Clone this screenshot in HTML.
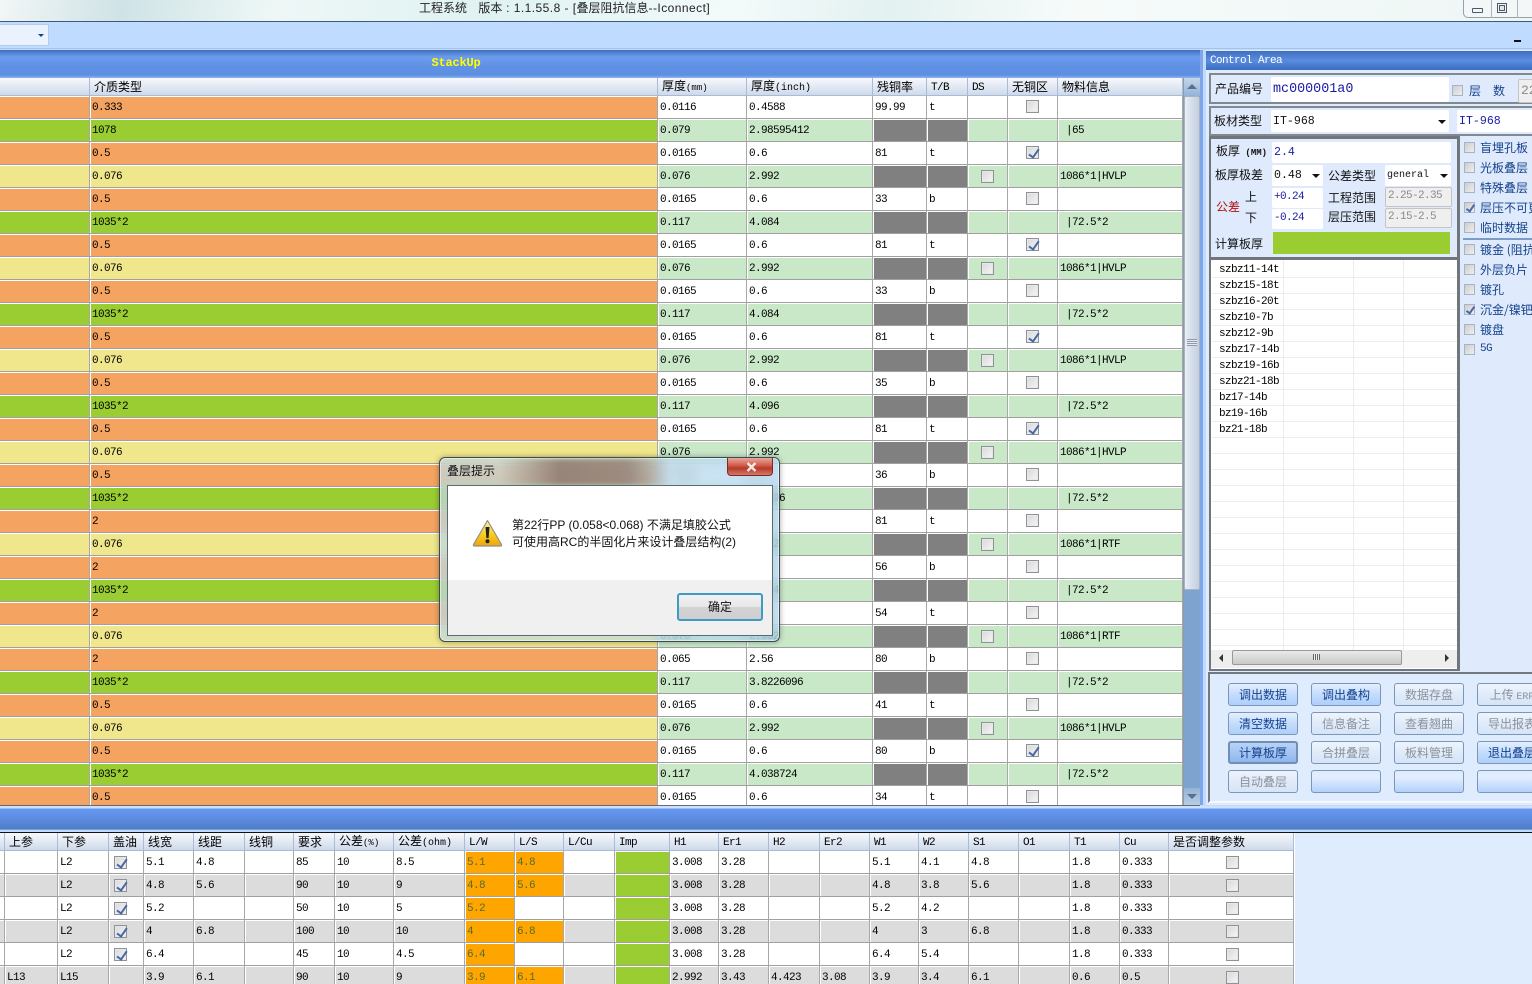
<!DOCTYPE html>
<html><head><meta charset="utf-8"><title>叠层阻抗信息</title>
<style>
html,body{margin:0;padding:0;width:1532px;height:984px;overflow:hidden;background:#bfdbff}
*{box-sizing:border-box}
body{position:relative;font:12px/1 "WenQuanYi Zen Hei","Noto Sans CJK SC",sans-serif;color:#111}
.a{position:absolute}
.m{font-family:"Liberation Mono","WenQuanYi Zen Hei",monospace;font-size:10px}
table{border-collapse:separate;border-spacing:0;table-layout:fixed;position:absolute;left:0;top:0;font:11px/1 "Liberation Mono","WenQuanYi Zen Hei",monospace;letter-spacing:-.6px;color:#000}
td,th{padding:3px 0 0 2px;overflow:hidden;white-space:nowrap;border-right:1px solid #a8a8a8;border-bottom:1px solid #a0a0a0;box-shadow:inset 1px 1px #fff}
td:first-child{box-shadow:inset 0 1px #fff}
th{height:18px;font-weight:normal;text-align:left;letter-spacing:0;font:12px/1 "WenQuanYi Zen Hei","Noto Sans CJK SC",sans-serif;background:linear-gradient(#f6f8fc,#dfe6f2 60%,#cdd9ea);padding:0 0 0 4px;box-shadow:none;border-color:#a9bcd3}
th.e{font:11px/1 "Liberation Mono",monospace;letter-spacing:-.6px;padding-top:3px}
#t td{height:23px}
.o td{background:#fff}.o td:nth-child(-n+2){background:#f4a460}
.g td{background:#c8e8c8}.g td:nth-child(-n+2){background:#9acd32}
.y td{background:#c8e8c8}.y td:nth-child(-n+2){background:#f0e68c}
.g td:nth-child(5),.g td:nth-child(6),.y td:nth-child(5),.y td:nth-child(6){background:#808080}
#b td{height:23px}
#bb tr:nth-child(even) td{background:#dcdcdc}
#bb tr:nth-child(odd) td{background:#fff}
#b td:nth-child(14){background:#9acd32!important}
#b td.r{background:#ffa500!important;color:#556b2f}
.c{display:block;width:13px;height:13px;margin:auto;border:1px solid #8f9297;background:linear-gradient(135deg,#d8d8d8,#f6f6f6);position:relative;top:-2px;left:-1px;box-shadow:inset 0 0 0 1px #e8e8e8}
.y .c{top:-1px}
#b .c{top:-1px;left:0}
#b .k{margin-left:3px}
.k::after{content:"";position:absolute;left:4px;top:0;width:4px;height:9px;border:solid #4a67a8;border-width:0 2px 2px 0;transform:rotate(35deg)}
.i{position:absolute;background:#fff;border-radius:2px;padding-left:2px;display:flex;align-items:center;font-family:"Liberation Mono",monospace;white-space:nowrap;overflow:hidden}
.bl{color:#1a1aa6}
.n{font-size:11px;letter-spacing:-.6px;padding-bottom:2px}
.gr{background:#efefef;border:1px solid #c4c4c4;color:#8a8a8a;font-size:11px;letter-spacing:-.6px;padding-bottom:2px}
.ar{position:absolute;width:0;height:0;border:4px solid transparent;border-top-color:#111;border-bottom-width:0}
.l{position:absolute;white-space:nowrap;color:#111}
.d{position:absolute;left:1480px;color:#15428b;white-space:nowrap}
.s{position:absolute;left:1464px;width:11px;height:11px;border:1px solid #a6b4c6;background:linear-gradient(135deg,#ccc,#efefef)}
.s.k::after{left:3px;top:0;width:3px;height:7px;border-width:0 2px 2px 0}
.lr{position:absolute;left:1219px;color:#000;font:11px/1 "Liberation Mono",monospace;letter-spacing:-.6px}
.hl{position:absolute;left:1212px;width:245px;height:1px;background:#ececec}
.b{position:absolute;width:70px;height:23px;border:1px solid #7b97b8;border-radius:3px;background:linear-gradient(#e4efff,#c6defe 45%,#aecffa);color:#15428b;text-align:center;line-height:21px;white-space:nowrap;overflow:hidden}
.b.f{color:#8b929a;background:linear-gradient(#eef4fd,#e0ebfa 50%,#d6e4f7)}
.b.z{background:linear-gradient(#dfeaff,#e3efff 30%,#b3d1fb)}
.b.h{border:2px solid #6f8fb6;background:linear-gradient(#b9d3f6,#8fb6ee);line-height:19px}
.v{letter-spacing:.45px}
</style></head><body>

<!-- title bar -->
<div class="a" style="left:0;top:0;width:1532px;height:22px;background:linear-gradient(100deg,#f2f6f6 0,#cfe3e6 8%,#eef7f6 18%,#dff2f2 32%,#f3fafa 48%,#e3f1f0 58%,#f6fbfa 70%,#eef6f5 100%);border-bottom:1px solid #3e5a78"></div>
<div class="a" style="left:419px;top:2px;font:12px/13px 'Liberation Sans','Noto Sans CJK SC',sans-serif;white-space:nowrap;color:#222">工程系统<span class="v">&nbsp;&nbsp; </span>版本<span class="v"> : 1.1.55.8 - [</span>叠层阻抗信息<span class="v">--Iconnect]</span></div>
<div class="a" style="left:1463px;top:-2px;width:80px;height:20px;background:#f4f7f8;border:1px solid #93a1ad;border-radius:0 0 0 5px"></div>
<div class="a" style="left:1491px;top:0;width:1px;height:18px;background:#aab5be"></div>
<div class="a" style="left:1517px;top:0;width:1px;height:18px;background:#aab5be"></div>
<div class="a" style="left:1472px;top:8px;width:11px;height:5px;border:1px solid #4a5a6a;border-radius:1px"></div>
<div class="a" style="left:1497px;top:3px;width:10px;height:10px;border:1px solid #4a5a6a"></div>
<div class="a" style="left:1499px;top:5px;width:6px;height:6px;border:1px solid #4a5a6a;background:#dfe6ea"></div>

<!-- toolbar -->
<div class="a" style="left:0;top:22px;width:1532px;height:27px;background:#bfdbff;border-bottom:1px solid #a9c2e2"></div>
<div class="a" style="left:0;top:24px;width:49px;height:22px;background:#eaf2fd;border:1px solid #b5cce8;border-left:0"></div>
<div class="ar" style="left:38px;top:34px;border-width:3px 3px 0;border-top-color:#15428b"></div>
<div class="a" style="left:1514px;top:40px;width:7px;height:2px;background:#111"></div>

<!-- stackup panel -->
<div class="a" style="left:0;top:50px;width:1202px;height:28px;background:linear-gradient(#3e6fbe,#6d9cee 25%,#5f90e4 60%,#5d8fe2 90%,#8fb5f1)"></div>
<div class="a" style="left:0;top:57px;width:912px;text-align:center;color:#ffff00;font:bold 12px/13px 'Liberation Mono',monospace;letter-spacing:-.2px">StackUp</div>

<div class="a" style="left:0;top:78px;width:1183px;height:727px;overflow:hidden;background:#fff">
<table id="t" style="width:1183px">
<colgroup><col style="width:90px"><col style="width:568px"><col style="width:89px"><col style="width:126px"><col style="width:54px"><col style="width:41px"><col style="width:40px"><col style="width:50px"><col style="width:125px"></colgroup>
<tr><th></th><th>介质类型</th><th>厚度<span class="m" style="font-size:9px">(mm)</span></th><th>厚度<span class="m">(inch)</span></th><th>残铜率</th><th class="e">T/B</th><th class="e">DS</th><th>无铜区</th><th>物料信息</th></tr>
<tr class="o"><td></td><td>0.333</td><td>0.0116</td><td>0.4588</td><td>99.99</td><td>t</td><td></td><td><i class="c"></i></td><td></td></tr>
<tr class="g"><td></td><td>1078</td><td>0.079</td><td>2.98595412</td><td></td><td></td><td></td><td></td><td>&nbsp;|65</td></tr>
<tr class="o"><td></td><td>0.5</td><td>0.0165</td><td>0.6</td><td>81</td><td>t</td><td></td><td><i class="c k"></i></td><td></td></tr>
<tr class="y"><td></td><td>0.076</td><td>0.076</td><td>2.992</td><td></td><td></td><td><i class="c"></i></td><td></td><td>1086*1|HVLP</td></tr>
<tr class="o"><td></td><td>0.5</td><td>0.0165</td><td>0.6</td><td>33</td><td>b</td><td></td><td><i class="c"></i></td><td></td></tr>
<tr class="g"><td></td><td>1035*2</td><td>0.117</td><td>4.084</td><td></td><td></td><td></td><td></td><td>&nbsp;|72.5*2</td></tr>
<tr class="o"><td></td><td>0.5</td><td>0.0165</td><td>0.6</td><td>81</td><td>t</td><td></td><td><i class="c k"></i></td><td></td></tr>
<tr class="y"><td></td><td>0.076</td><td>0.076</td><td>2.992</td><td></td><td></td><td><i class="c"></i></td><td></td><td>1086*1|HVLP</td></tr>
<tr class="o"><td></td><td>0.5</td><td>0.0165</td><td>0.6</td><td>33</td><td>b</td><td></td><td><i class="c"></i></td><td></td></tr>
<tr class="g"><td></td><td>1035*2</td><td>0.117</td><td>4.084</td><td></td><td></td><td></td><td></td><td>&nbsp;|72.5*2</td></tr>
<tr class="o"><td></td><td>0.5</td><td>0.0165</td><td>0.6</td><td>81</td><td>t</td><td></td><td><i class="c k"></i></td><td></td></tr>
<tr class="y"><td></td><td>0.076</td><td>0.076</td><td>2.992</td><td></td><td></td><td><i class="c"></i></td><td></td><td>1086*1|HVLP</td></tr>
<tr class="o"><td></td><td>0.5</td><td>0.0165</td><td>0.6</td><td>35</td><td>b</td><td></td><td><i class="c"></i></td><td></td></tr>
<tr class="g"><td></td><td>1035*2</td><td>0.117</td><td>4.096</td><td></td><td></td><td></td><td></td><td>&nbsp;|72.5*2</td></tr>
<tr class="o"><td></td><td>0.5</td><td>0.0165</td><td>0.6</td><td>81</td><td>t</td><td></td><td><i class="c k"></i></td><td></td></tr>
<tr class="y"><td></td><td>0.076</td><td>0.076</td><td>2.992</td><td></td><td></td><td><i class="c"></i></td><td></td><td>1086*1|HVLP</td></tr>
<tr class="o"><td></td><td>0.5</td><td>0.0165</td><td>0.6</td><td>36</td><td>b</td><td></td><td><i class="c"></i></td><td></td></tr>
<tr class="g"><td></td><td>1035*2</td><td>0.117</td><td>4.0896</td><td></td><td></td><td></td><td></td><td>&nbsp;|72.5*2</td></tr>
<tr class="o"><td></td><td>2</td><td>0.065</td><td>2.56</td><td>81</td><td>t</td><td></td><td><i class="c"></i></td><td></td></tr>
<tr class="y"><td></td><td>0.076</td><td>0.076</td><td>2.992</td><td></td><td></td><td><i class="c"></i></td><td></td><td>1086*1|RTF</td></tr>
<tr class="o"><td></td><td>2</td><td>0.065</td><td>2.56</td><td>56</td><td>b</td><td></td><td><i class="c"></i></td><td></td></tr>
<tr class="g"><td></td><td>1035*2</td><td>0.117</td><td>4.084</td><td></td><td></td><td></td><td></td><td>&nbsp;|72.5*2</td></tr>
<tr class="o"><td></td><td>2</td><td>0.065</td><td>2.56</td><td>54</td><td>t</td><td></td><td><i class="c"></i></td><td></td></tr>
<tr class="y"><td></td><td>0.076</td><td>0.076</td><td>2.992</td><td></td><td></td><td><i class="c"></i></td><td></td><td>1086*1|RTF</td></tr>
<tr class="o"><td></td><td>2</td><td>0.065</td><td>2.56</td><td>80</td><td>b</td><td></td><td><i class="c"></i></td><td></td></tr>
<tr class="g"><td></td><td>1035*2</td><td>0.117</td><td>3.8226096</td><td></td><td></td><td></td><td></td><td>&nbsp;|72.5*2</td></tr>
<tr class="o"><td></td><td>0.5</td><td>0.0165</td><td>0.6</td><td>41</td><td>t</td><td></td><td><i class="c"></i></td><td></td></tr>
<tr class="y"><td></td><td>0.076</td><td>0.076</td><td>2.992</td><td></td><td></td><td><i class="c"></i></td><td></td><td>1086*1|HVLP</td></tr>
<tr class="o"><td></td><td>0.5</td><td>0.0165</td><td>0.6</td><td>80</td><td>b</td><td></td><td><i class="c k"></i></td><td></td></tr>
<tr class="g"><td></td><td>1035*2</td><td>0.117</td><td>4.038724</td><td></td><td></td><td></td><td></td><td>&nbsp;|72.5*2</td></tr>
<tr class="o"><td></td><td>0.5</td><td>0.0165</td><td>0.6</td><td>34</td><td>t</td><td></td><td><i class="c"></i></td><td></td></tr>
</table>
</div>

<!-- vertical scrollbar -->
<div class="a" style="left:1183px;top:78px;width:17px;height:727px;background:#7fa3cf;border-left:1px solid #8a9bb0"></div>
<div class="a" style="left:1184px;top:78px;width:16px;height:18px;background:linear-gradient(#c4d5ea,#94b3d8)"></div>
<div class="ar" style="left:1187px;top:84px;border-width:0 5px 5px;border-color:transparent transparent #5a6f8a"></div>
<div class="a" style="left:1184px;top:96px;width:16px;height:494px;background:linear-gradient(90deg,#e9eef6,#d3dce9 55%,#c2cfe0);border:1px solid #a7b2c2;border-radius:2px"></div>
<div class="a" style="left:1187px;top:339px;width:10px;height:7px;background:repeating-linear-gradient(#8f9bab 0 1px,#e5eaf0 1px 2px)"></div>
<div class="a" style="left:1184px;top:788px;width:16px;height:17px;background:linear-gradient(#94b3d8,#b8cde6)"></div>
<div class="ar" style="left:1187px;top:794px;border-width:5px 5px 0;border-color:#5a6f8a transparent transparent"></div>
<div class="a" style="left:1200px;top:50px;width:3px;height:755px;background:#7ea6e8"></div>
<div class="a" style="left:0;top:805px;width:1200px;height:1px;background:#5e6b7c"></div>

<!-- bottom band -->
<div class="a" style="left:0;top:806px;width:1532px;height:26px;background:linear-gradient(#cfe0fa 0,#d0e2fb 2px,#6597f2 3px,#5f90e6 40%,#4f7dc6 90%,#bfdbff 92%)"></div>
<div class="a" style="left:0;top:832px;width:1532px;height:152px;background:#dfecfd;border-top:1px solid #111"></div>

<!-- bottom grid -->
<div class="a" style="left:0;top:833px;width:1295px;height:151px;overflow:hidden;background:#fff">
<table id="b" style="width:1294px">
<colgroup><col style="width:5px"><col style="width:53px"><col style="width:51px"><col style="width:35px"><col style="width:50px"><col style="width:51px"><col style="width:49px"><col style="width:41px"><col style="width:59px"><col style="width:71px"><col style="width:50px"><col style="width:49px"><col style="width:51px"><col style="width:55px"><col style="width:49px"><col style="width:50px"><col style="width:51px"><col style="width:50px"><col style="width:49px"><col style="width:50px"><col style="width:50px"><col style="width:51px"><col style="width:50px"><col style="width:49px"><col style="width:125px"></colgroup>
<thead><tr><th></th><th>上参</th><th>下参</th><th>盖油</th><th>线宽</th><th>线距</th><th>线铜</th><th>要求</th><th>公差<span class="m" style="font-size:9px">(%)</span></th><th>公差<span class="m">(ohm)</span></th><th class="e">L/W</th><th class="e">L/S</th><th class="e">L/Cu</th><th class="e">Imp</th><th class="e">H1</th><th class="e">Er1</th><th class="e">H2</th><th class="e">Er2</th><th class="e">W1</th><th class="e">W2</th><th class="e">S1</th><th class="e">O1</th><th class="e">T1</th><th class="e">Cu</th><th>是否调整参数</th></tr></thead>
<tbody id="bb">
<tr><td></td><td></td><td>L2</td><td><i class="c k"></i></td><td>5.1</td><td>4.8</td><td></td><td>85</td><td>10</td><td>8.5</td><td class="r">5.1</td><td class="r">4.8</td><td></td><td></td><td>3.008</td><td>3.28</td><td></td><td></td><td>5.1</td><td>4.1</td><td>4.8</td><td></td><td>1.8</td><td>0.333</td><td><i class="c"></i></td></tr>
<tr><td></td><td></td><td>L2</td><td><i class="c k"></i></td><td>4.8</td><td>5.6</td><td></td><td>90</td><td>10</td><td>9</td><td class="r">4.8</td><td class="r">5.6</td><td></td><td></td><td>3.008</td><td>3.28</td><td></td><td></td><td>4.8</td><td>3.8</td><td>5.6</td><td></td><td>1.8</td><td>0.333</td><td><i class="c"></i></td></tr>
<tr><td></td><td></td><td>L2</td><td><i class="c k"></i></td><td>5.2</td><td></td><td></td><td>50</td><td>10</td><td>5</td><td class="r">5.2</td><td></td><td></td><td></td><td>3.008</td><td>3.28</td><td></td><td></td><td>5.2</td><td>4.2</td><td></td><td></td><td>1.8</td><td>0.333</td><td><i class="c"></i></td></tr>
<tr><td></td><td></td><td>L2</td><td><i class="c k"></i></td><td>4</td><td>6.8</td><td></td><td>100</td><td>10</td><td>10</td><td class="r">4</td><td class="r">6.8</td><td></td><td></td><td>3.008</td><td>3.28</td><td></td><td></td><td>4</td><td>3</td><td>6.8</td><td></td><td>1.8</td><td>0.333</td><td><i class="c"></i></td></tr>
<tr><td></td><td></td><td>L2</td><td><i class="c k"></i></td><td>6.4</td><td></td><td></td><td>45</td><td>10</td><td>4.5</td><td class="r">6.4</td><td></td><td></td><td></td><td>3.008</td><td>3.28</td><td></td><td></td><td>6.4</td><td>5.4</td><td></td><td></td><td>1.8</td><td>0.333</td><td><i class="c"></i></td></tr>
<tr><td></td><td>L13</td><td>L15</td><td></td><td>3.9</td><td>6.1</td><td></td><td>90</td><td>10</td><td>9</td><td class="r">3.9</td><td class="r">6.1</td><td></td><td></td><td>2.992</td><td>3.43</td><td>4.423</td><td>3.08</td><td>3.9</td><td>3.4</td><td>6.1</td><td></td><td>0.6</td><td>0.5</td><td><i class="c"></i></td></tr>
</tbody>
</table>
</div>

<!-- control area -->
<div class="a" style="left:1206px;top:50px;width:326px;height:755px;background:#dfebfd"></div>
<div class="a" style="left:1206px;top:51px;width:326px;height:19px;background:linear-gradient(#3f70bf,#5a8ce0 50%,#3a6cc0);color:#fff;font:11px/18px 'Liberation Mono',monospace;letter-spacing:-.6px;padding:1px 0 0 4px">Control Area</div>

<div class="a" style="left:1209px;top:73px;width:330px;height:31px;border:2px solid #808890"></div>
<div class="l" style="left:1215px;top:83px">产品编号</div>
<div class="i bl" style="left:1271px;top:77px;width:178px;height:25px;font-size:13.4px;padding-top:1px">mc000001a0</div>
<div class="s" style="left:1452px;top:85px"></div>
<div class="l" style="left:1469px;top:85px;color:#15428b">层</div>
<div class="l" style="left:1493px;top:85px;color:#15428b">数</div>
<div class="i gr" style="left:1518px;top:79px;width:30px;height:24px;font-size:13px;letter-spacing:0">22</div>

<div class="a" style="left:1209px;top:106px;width:330px;height:30px;border:2px solid #808890"></div>
<div class="l" style="left:1214px;top:115px">板材类型</div>
<div class="i" style="left:1271px;top:110px;width:178px;height:22px;font-size:11.6px;padding-top:1px">IT-968</div>
<div class="ar" style="left:1438px;top:120px"></div>
<div class="i bl" style="left:1457px;top:110px;width:80px;height:22px;font-size:11.6px;padding-top:1px">IT-968</div>

<div class="a" style="left:1209px;top:136px;width:251px;height:123px;border:2px solid #70767c;border-right-width:3px;border-top-width:3px"></div>
<div class="l" style="left:1216px;top:145px">板厚<span class="m" style="font-size:9px;font-weight:bold"> (MM)</span></div>
<div class="i bl" style="left:1272px;top:142px;width:179px;height:21px;font-size:11.6px">2.4</div>
<div class="l" style="left:1215px;top:169px">板厚极差</div>
<div class="i" style="left:1272px;top:165px;width:51px;height:21px;font-size:11.6px">0.48</div>
<div class="ar" style="left:1312px;top:174px"></div>
<div class="l" style="left:1328px;top:170px">公差类型</div>
<div class="i" style="left:1385px;top:165px;width:66px;height:21px;font-size:10px">general</div>
<div class="ar" style="left:1440px;top:174px"></div>
<div class="l" style="left:1216px;top:201px;color:#b01010">公差</div>
<div class="l" style="left:1245px;top:191px">上</div>
<div class="l" style="left:1245px;top:212px">下</div>
<div class="i bl n" style="left:1272px;top:188px;width:51px;height:20px">+0.24</div>
<div class="i bl n" style="left:1272px;top:209px;width:51px;height:20px">-0.24</div>
<div class="l" style="left:1328px;top:192px">工程范围</div>
<div class="l" style="left:1328px;top:211px">层压范围</div>
<div class="i gr" style="left:1385px;top:187px;width:67px;height:20px">2.25-2.35</div>
<div class="i gr" style="left:1385px;top:208px;width:67px;height:20px">2.15-2.5</div>
<div class="l" style="left:1215px;top:238px">计算板厚</div>
<div class="a" style="left:1273px;top:232px;width:177px;height:22px;background:#9acd32"></div>

<!-- list -->
<div class="a" style="left:1209px;top:258px;width:251px;height:413px;background:#fff;border:2px solid #70767c;border-right-width:3px"></div>
<div class="a" style="left:1283px;top:260px;width:1px;height:390px;background:#ececec"></div>
<div class="a" style="left:1353px;top:260px;width:1px;height:390px;background:#ececec"></div>
<div class="a" style="left:1403px;top:260px;width:1px;height:390px;background:#ececec"></div>
<div class="hl" style="top:277px"></div><div class="hl" style="top:293px"></div><div class="hl" style="top:309px"></div><div class="hl" style="top:325px"></div><div class="hl" style="top:341px"></div><div class="hl" style="top:357px"></div><div class="hl" style="top:373px"></div><div class="hl" style="top:389px"></div><div class="hl" style="top:405px"></div><div class="hl" style="top:421px"></div><div class="hl" style="top:437px"></div><div class="hl" style="top:453px"></div><div class="hl" style="top:469px"></div><div class="hl" style="top:485px"></div><div class="hl" style="top:501px"></div><div class="hl" style="top:517px"></div><div class="hl" style="top:533px"></div><div class="hl" style="top:549px"></div><div class="hl" style="top:565px"></div><div class="hl" style="top:581px"></div><div class="hl" style="top:597px"></div><div class="hl" style="top:613px"></div><div class="hl" style="top:629px"></div><div class="hl" style="top:645px"></div>
<div class="lr" style="top:265px">szbz11-14t</div>
<div class="lr" style="top:281px">szbz15-18t</div>
<div class="lr" style="top:297px">szbz16-20t</div>
<div class="lr" style="top:313px">szbz10-7b</div>
<div class="lr" style="top:329px">szbz12-9b</div>
<div class="lr" style="top:345px">szbz17-14b</div>
<div class="lr" style="top:361px">szbz19-16b</div>
<div class="lr" style="top:377px">szbz21-18b</div>
<div class="lr" style="top:393px">bz17-14b</div>
<div class="lr" style="top:409px">bz19-16b</div>
<div class="lr" style="top:425px">bz21-18b</div>
<div class="a" style="left:1211px;top:650px;width:246px;height:18px;background:#eee"></div>
<div class="a" style="left:1232px;top:650px;width:170px;height:15px;background:linear-gradient(#eaeaea,#c9c9c9);border:1px solid #999;border-radius:2px"></div>
<div class="a" style="left:1313px;top:654px;width:7px;height:6px;background:repeating-linear-gradient(90deg,#666 0 1px,#eee 1px 2px)"></div>
<div class="ar" style="left:1219px;top:654px;border-width:4px 4px 4px 0;border-color:transparent #333 transparent transparent"></div>
<div class="ar" style="left:1445px;top:654px;border-width:4px 0 4px 4px;border-color:transparent transparent transparent #333"></div>

<!-- check list -->
<div class="s" style="top:142px"></div><div class="d" style="top:142px">盲埋孔板</div>
<div class="s" style="top:162px"></div><div class="d" style="top:162px">光板叠层</div>
<div class="s" style="top:182px"></div><div class="d" style="top:182px">特殊叠层</div>
<div class="s k" style="top:202px"></div><div class="d" style="top:202px">层压不可更改</div>
<div class="s" style="top:222px"></div><div class="d" style="top:222px">临时数据</div>
<div class="a" style="left:1463px;top:238px;width:69px;height:2px;background:#7c9cc8"></div>
<div class="s" style="top:244px"></div><div class="d" style="top:244px">镀金 (阻抗</div>
<div class="s" style="top:264px"></div><div class="d" style="top:264px">外层负片</div>
<div class="s" style="top:284px"></div><div class="d" style="top:284px">镀孔</div>
<div class="s k" style="top:304px"></div><div class="d" style="top:304px">沉金/镍钯</div>
<div class="s" style="top:324px"></div><div class="d" style="top:324px">镀盘</div>
<div class="s" style="top:344px"></div><div class="d" style="top:344px;font-family:'Liberation Mono',monospace;font-size:11px;letter-spacing:-.6px">5G</div>

<!-- button panel -->
<div class="a" style="left:1208px;top:672px;width:330px;height:131px;background:#dfecfd;border:1px solid #fff;border-top:2px solid #707880;border-left:2px solid #707880;border-bottom:2px solid #f4f8fe"></div>
<div class="b" style="left:1228px;top:683px">调出数据</div>
<div class="b" style="left:1311px;top:683px">调出叠构</div>
<div class="b f" style="left:1394px;top:683px">数据存盘</div>
<div class="b f" style="left:1477px;top:683px">上传 <span class="m">ERP</span></div>
<div class="b" style="left:1228px;top:712px">清空数据</div>
<div class="b f" style="left:1311px;top:712px">信息备注</div>
<div class="b f" style="left:1394px;top:712px">查看翘曲</div>
<div class="b f" style="left:1477px;top:712px">导出报表</div>
<div class="b h" style="left:1228px;top:741px">计算板厚</div>
<div class="b f" style="left:1311px;top:741px">合拼叠层</div>
<div class="b f" style="left:1394px;top:741px">板料管理</div>
<div class="b" style="left:1477px;top:741px">退出叠层</div>
<div class="b f" style="left:1228px;top:770px">自动叠层</div>
<div class="b z" style="left:1311px;top:770px"></div>
<div class="b z" style="left:1394px;top:770px"></div>
<div class="b z" style="left:1477px;top:770px"></div>

<!-- dialog -->
<div class="a" style="left:439px;top:457px;width:341px;height:185px;border:1px solid #3d4a50;border-radius:6px;background:linear-gradient(90deg,rgba(190,215,225,.72),rgba(190,220,235,.6) 40%,rgba(170,210,240,.65));backdrop-filter:blur(7px);box-shadow:0 0 6px rgba(0,0,0,.35),inset 0 0 0 1px rgba(255,255,255,.5)"></div>
<div class="a" style="left:500px;top:459px;width:170px;height:26px;background:linear-gradient(90deg,rgba(130,110,100,0),rgba(120,95,85,.65) 35%,rgba(125,100,90,.6) 75%,rgba(130,110,100,0));filter:blur(2px)"></div>
<div class="l" style="left:447px;top:465px;font-size:12px;color:#111">叠层提示</div>
<div class="a" style="left:727px;top:458px;width:46px;height:18px;border:1px solid #7d2a22;border-top:0;border-radius:0 0 4px 4px;background:linear-gradient(#e9a79c,#cf5a48 45%,#b5392a 60%,#d27a68)"></div>
<svg class="a" style="left:746px;top:462px" width="11" height="10" viewBox="0 0 11 10"><path d="M1.5 1 L9.5 9 M9.5 1 L1.5 9" stroke="#f2e8e6" stroke-width="2.4" fill="none"/></svg>
<div class="a" style="left:447px;top:485px;width:326px;height:151px;background:#fff;border:1px solid #5b6b74"></div>
<div class="a" style="left:448px;top:580px;width:324px;height:55px;background:#f0f0f0"></div>
<svg class="a" style="left:472px;top:519px" width="31" height="28" viewBox="0 0 31 28">
<defs><linearGradient id="w" x1="0" y1="0" x2="0" y2="1"><stop offset="0" stop-color="#fff2a8"/><stop offset=".55" stop-color="#f8cd1c"/><stop offset="1" stop-color="#eda50d"/></linearGradient></defs>
<path d="M15.5 1.5 L29.5 25.5 Q30 27 28.5 27 L2.5 27 Q1 27 1.5 25.5 Z" fill="url(#w)" stroke="#8f8f8f" stroke-width="1.2" stroke-linejoin="round"/>
<path d="M13.5 8 L17.5 8 L16.6 19 L14.4 19 Z" fill="#222"/><circle cx="15.5" cy="22.3" r="2" fill="#222"/>
</svg>
<div class="l" style="left:512px;top:518px;font:12px/14px 'Liberation Sans','Noto Sans CJK SC',sans-serif;color:#111">第22行PP (0.058&lt;0.068) 不满足填胶公式</div>
<div class="l" style="left:512px;top:535px;font:12px/14px 'Liberation Sans','Noto Sans CJK SC',sans-serif;color:#111">可使用高RC的半固化片来设计叠层结构(2)</div>
<div class="a" style="left:677px;top:593px;width:86px;height:28px;border:2px solid #3f9bc4;border-radius:3px;background:linear-gradient(#f3f3f3,#e7e7e7 48%,#d3d3d3 52%,#cfcfcf);text-align:center;line-height:24px;color:#111">确定</div>

</body></html>
